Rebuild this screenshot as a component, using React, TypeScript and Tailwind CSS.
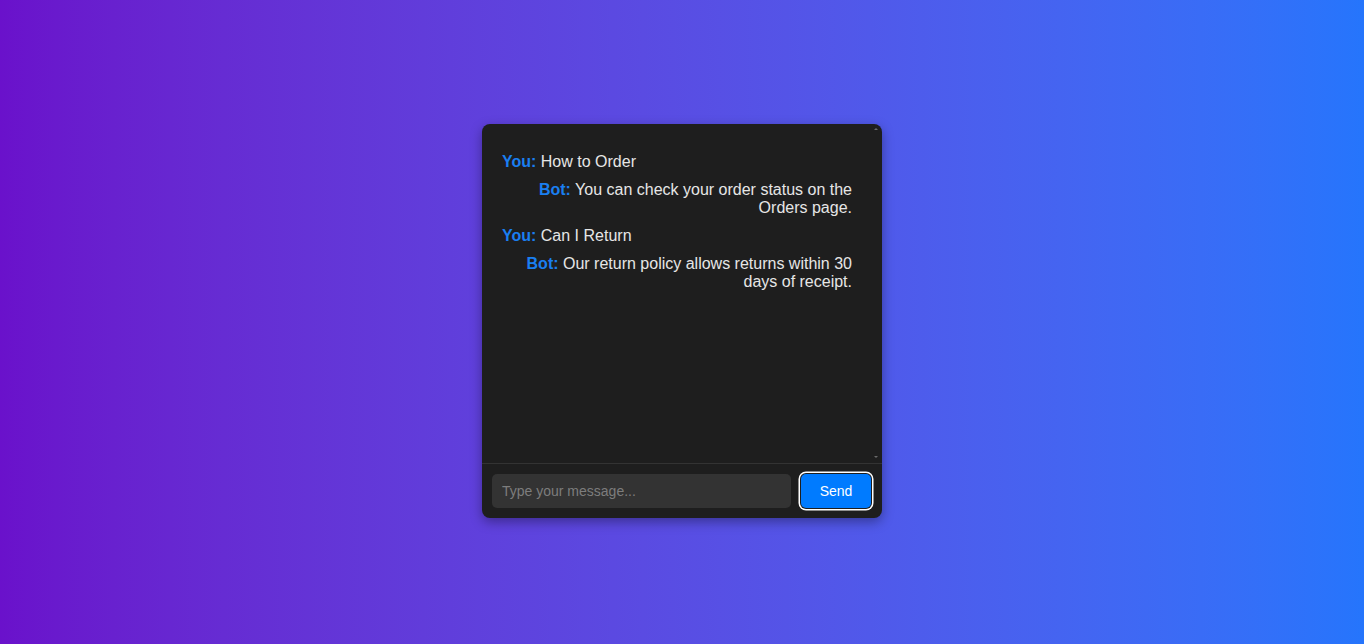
import React from "react";

type Msg = { from: "You" | "Bot"; text: string };

const messages: Msg[] = [
  { from: "You", text: "How to Order" },
  { from: "Bot", text: "You can check your order status on the Orders page." },
  { from: "You", text: "Can I Return" },
  { from: "Bot", text: "Our return policy allows returns within 30 days of receipt." },
];

export default function App() {
  return (
    <div
      className="w-full h-[644px] pb-[2px] flex items-center justify-center bg-gradient-to-r from-[#6a11cb] to-[#2575fc]"
      style={{ fontFamily: '"Liberation Sans", Arial, sans-serif' }}
    >
      <div className="w-[400px] h-[394px] bg-[#1e1e1e] rounded-[8px] shadow-[0_4px_12px_rgba(0,0,0,0.35)] flex flex-col overflow-hidden">
        <div className="relative h-[339px] overflow-hidden pt-[29px] pl-[20px] pr-[30px]">
          {messages.map((m, i) => (
            <div
              key={i}
              className={`mb-[10px] text-[16px] leading-[18px] text-[#e6e6e6] ${
                m.from === "Bot" ? "text-right" : "text-left"
              }`}
            >
              <span className="font-bold text-[#1a7ff0]">{m.from}:</span> {m.text}
            </div>
          ))}
          <div className="absolute right-[4px] top-[4px] w-0 h-0 border-l-[2px] border-r-[2px] border-b-[2px] border-l-transparent border-r-transparent border-b-[#6a6a6a]" />
          <div className="absolute right-[4px] bottom-[5px] w-0 h-0 border-l-[2px] border-r-[2px] border-t-[2px] border-l-transparent border-r-transparent border-t-[#6a6a6a]" />
        </div>
        <div className="border-t border-[#333333] p-[10px] flex gap-[10px] items-center">
          <input
            type="text"
            placeholder="Type your message..."
            className="flex-1 h-[34px] bg-[#333333] rounded-[5px] px-[10px] text-[14px] text-[#e6e6e6] placeholder:text-[#7d7d7d] outline-none border-0"
            style={{ fontFamily: '"Liberation Sans", Arial, sans-serif' }}
          />
          <button
            className="w-[70px] h-[34px] mr-[1px] bg-[#007bff] text-white text-[14px] rounded-[5px] ring-[1.5px] ring-white ring-offset-1 ring-offset-[#1e1e1e]"
            style={{ fontFamily: '"Liberation Sans", Arial, sans-serif' }}
          >
            Send
          </button>
        </div>
      </div>
    </div>
  );
}
